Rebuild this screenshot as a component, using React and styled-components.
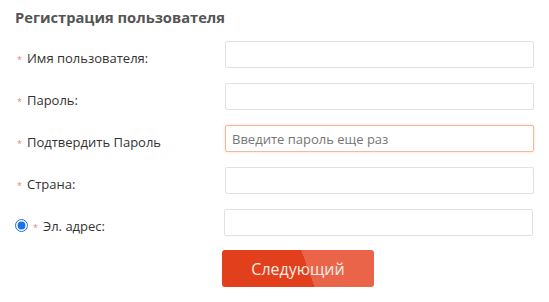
import React from "react";
import styled, { createGlobalStyle } from "styled-components";

const GlobalStyle = createGlobalStyle`
  body {
    margin: 0;
    background: #ffffff;
    font-family: "Open Sans", "Noto Sans", sans-serif;
  }
`;

const Page = styled.div`
  width: 549px;
  height: 302px;
  box-sizing: border-box;
  padding: 7px 0 0 15px;
`;

const Title = styled.h2`
  margin: 0 0 14px 0;
  font-size: 14.7px;
  line-height: 20px;
  font-weight: 700;
  color: #555;
`;

const Form = styled.form`
  display: flex;
  flex-direction: column;
  gap: 15px;
`;

const Row = styled.div`
  display: grid;
  grid-template-columns: ${props => props.labelWidth || 210}px 309px;
  align-items: center;
  height: 27px;
`;

const Label = styled.label`
  display: flex;
  align-items: center;
  padding-top: 6px;
  font-size: 13px;
  color: #333;
  white-space: nowrap;
`;

const Star = styled.span`
  color: #e08a80;
  font-size: 9px;
  line-height: 9px;
  margin: 3px 5px 0 2px;
`;

const Radio = styled.input`
  width: 13px;
  height: 13px;
  margin: 0 3px 0 0;
  accent-color: #1a73e8;
`;

const Field = styled.input`
  box-sizing: border-box;
  width: 309px;
  height: 27px;
  border: 1px solid ${props => (props.active ? "#f3b99f" : "#e1e1e1")};
  border-radius: 2px;
  box-shadow: ${props =>
    props.active ? "0 0 3px rgba(240, 140, 90, 0.35)" : "none"};
  padding: 0 6px;
  font-family: inherit;
  font-size: 13px;
  color: #333;
  outline: none;

  ::placeholder {
    color: #8a8a8a;
  }
`;

const ButtonRow = styled.div`
  padding-left: 207px;
  margin-top: 14px;
`;

const NextButton = styled.button`
  width: 152px;
  height: 37px;
  border: none;
  border-radius: 3px;
  background: linear-gradient(70deg, #e23f1d 56%, #ea644a 56%);
  color: #fdeee2;
  font-family: inherit;
  font-size: 16px;
  cursor: pointer;
`;

const fields = [
  { label: "Имя пользователя:" },
  { label: "Пароль:" },
  { label: "Подтвердить Пароль", placeholder: "Введите пароль еще раз", active: true },
  { label: "Страна:" }
];

export default function App() {
  return (
    <Page>
      <GlobalStyle />
      <Title>Регистрация пользователя</Title>
      <Form>
        {fields.map(f => (
          <Row key={f.label}>
            <Label>
              <Star>*</Star>
              {f.label}
            </Label>
            <Field placeholder={f.placeholder} active={f.active} />
          </Row>
        ))}
        <Row labelWidth={209}>
          <Label>
            <Radio type="radio" defaultChecked />
            <Star>*</Star>
            Эл. адрес:
          </Label>
          <Field />
        </Row>
      </Form>
      <ButtonRow>
        <NextButton type="button">Следующий</NextButton>
      </ButtonRow>
    </Page>
  );
}
